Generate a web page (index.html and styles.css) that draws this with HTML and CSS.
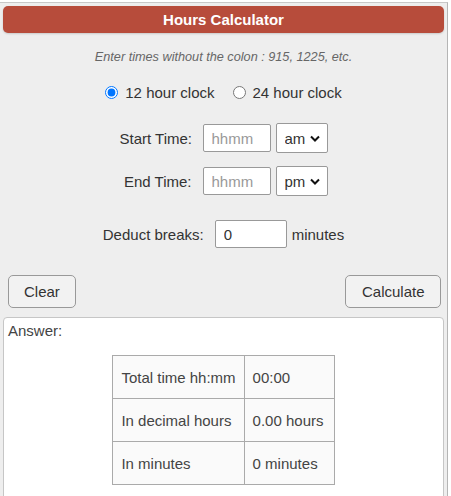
FILE: index.html
```html
<!DOCTYPE html>
<html>
<head>
    <title>Hours Calculator</title>
    <meta charset="UTF-8">
    <meta name="viewport" content="width=device-width, initial-scale=1.0">
    <link rel="stylesheet" href="styles.css">
</head>
<body>
    <div class="calc">
        <div class="calc-title">Hours Calculator</div>

        <p class="hint">Enter times without the colon : 915, 1225, etc.</p>

        <div class="row clock-row">
            <label><input type="radio" name="clock" checked> 12 hour clock</label>
            <label><input type="radio" name="clock"> 24 hour clock</label>
        </div>

        <div class="row time-row">
            <span class="label time-label">Start Time:</span>
            <input type="text" class="time-input" placeholder="hhmm">
            <select class="ampm">
                <option selected>am</option>
                <option>pm</option>
            </select>
        </div>

        <div class="row time-row">
            <span class="label time-label">End Time:</span>
            <input type="text" class="time-input" placeholder="hhmm">
            <select class="ampm">
                <option>am</option>
                <option selected>pm</option>
            </select>
        </div>

        <div class="row break-row">
            <span class="label">Deduct breaks:</span>
            <input type="text" class="break-input" value="0">
            <span>minutes</span>
        </div>

        <div class="buttons">
            <button class="btn">Clear</button>
            <button class="btn btn-calc">Calculate</button>
        </div>

        <div class="answer">
            <div class="answer-label">Answer:</div>
            <table class="results">
                <tr><td>Total time hh:mm</td><td>00:00</td></tr>
                <tr><td>In decimal hours</td><td>0.00 hours</td></tr>
                <tr><td>In minutes</td><td>0 minutes</td></tr>
            </table>
        </div>
    </div>
</body>
</html>
```

FILE: styles.css
```css
/* Basic Reset */
* {
    box-sizing: border-box;
    margin: 0;
    padding: 0;
    font-family: 'Liberation Sans', Arial, sans-serif;
}

body {
    background-color: #fff;
    color: #333;
    overflow: hidden;
}

/* Outer panel */
.calc {
    width: 449px;
    height: 520px;
    margin-top: 2px;
    margin-left: -1px;
    padding: 3px 3px 0 4px;
    background-color: #eee;
    border-top: 1px solid #c8c8c8;
    border-right: 1px solid #b5b5b5;
}

.calc-title {
    height: 27px;
    line-height: 27px;
    text-align: center;
    color: #fff;
    font-weight: bold;
    font-size: 15px;
    background-color: #b74c3b;
    border-radius: 5px;
    box-shadow: 0 1px 2px rgba(0, 0, 0, 0.15);
}

.hint {
    margin-top: 17px;
    text-align: center;
    font-size: 12.7px;
    font-style: italic;
    color: #666;
}

/* Centred form rows */
.row {
    display: flex;
    align-items: center;
    justify-content: center;
    font-size: 15px;
    color: #333;
    white-space: nowrap;
}

.clock-row {
    margin-top: 20px;
    gap: 18px;
}

.clock-row label {
    display: flex;
    align-items: center;
    gap: 7px;
}

.clock-row input {
    width: 13px;
    height: 13px;
    margin: 0;
}

.time-row {
    height: 28px;
    margin-top: 23px;
}

.time-row + .time-row {
    margin-top: 15px;
}

.label {
    flex-shrink: 0;
    margin-right: 11px;
}

.time-label {
    width: 72px;
    text-align: right;
}

.time-input,
.break-input {
    flex-shrink: 0;
    height: 28px;
    padding: 0 8px;
    font-size: 15px;
    color: #333;
    background: #fff;
    border: 1px solid #999;
    border-radius: 2px;
}

.time-input {
    width: 68px;
}

.time-input::placeholder {
    color: #999;
}

.ampm {
    appearance: none;
    -webkit-appearance: none;
    flex-shrink: 0;
    width: 52px;
    height: 30px;
    margin-left: 5px;
    padding-left: 8px;
    font-size: 15px;
    color: #333;
    background: #fff url("data:image/svg+xml,%3Csvg xmlns='http://www.w3.org/2000/svg' width='10' height='7' viewBox='0 0 10 7'%3E%3Cpath d='M1 1.5l4 4 4-4' fill='none' stroke='%23111' stroke-width='2'/%3E%3C/svg%3E") no-repeat right 7px center;
    border: 1px solid #999;
    border-radius: 2px;
}

.break-row {
    margin-top: 25px;
    height: 28px;
}

.break-input {
    width: 72px;
    margin-right: 5px;
}

/* Buttons */
.buttons {
    display: flex;
    justify-content: space-between;
    margin-top: 27px;
    padding: 0 3px 0 5px;
}

.btn {
    height: 33px;
    padding: 0 15px;
    font-size: 15px;
    color: #333;
    background-color: #f2f2f2;
    border: 1px solid #999;
    border-radius: 5px;
    cursor: pointer;
}

.btn-calc {
    padding: 0 15.5px;
}

/* Answer box */
.answer {
    height: 200px;
    margin-top: 9px;
    padding: 4px 4px;
    background: #fff;
    border: 1px solid #c6c6c6;
    border-radius: 4px;
}

.answer-label {
    font-size: 15px;
    color: #444;
}

.results {
    margin: 16px auto 0;
    border-collapse: collapse;
    font-size: 15px;
    color: #444;
}

.results td {
    height: 43px;
    padding: 0 8px;
    white-space: nowrap;
    background: #fafafa;
    border: 1px solid #aaa;
}

.results td:first-child {
    width: 130px;
}

.results td:last-child {
    width: 90px;
}
```
